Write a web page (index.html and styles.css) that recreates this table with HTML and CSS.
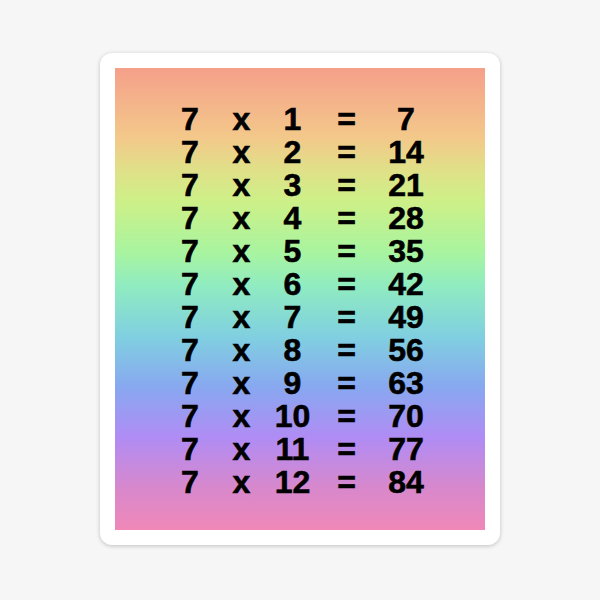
FILE: index.html
```html
<!DOCTYPE html>
<html>
<head>
<meta charset="utf-8">
<link rel="stylesheet" href="styles.css">
</head>
<body>
<div class="sticker">
  <div class="panel">
    <div class="table">
      <span>7</span><span>x</span><span>1</span><span>=</span><span>7</span>
      <span>7</span><span>x</span><span>2</span><span>=</span><span>14</span>
      <span>7</span><span>x</span><span>3</span><span>=</span><span>21</span>
      <span>7</span><span>x</span><span>4</span><span>=</span><span>28</span>
      <span>7</span><span>x</span><span>5</span><span>=</span><span>35</span>
      <span>7</span><span>x</span><span>6</span><span>=</span><span>42</span>
      <span>7</span><span>x</span><span>7</span><span>=</span><span>49</span>
      <span>7</span><span>x</span><span>8</span><span>=</span><span>56</span>
      <span>7</span><span>x</span><span>9</span><span>=</span><span>63</span>
      <span>7</span><span>x</span><span>10</span><span>=</span><span>70</span>
      <span>7</span><span>x</span><span>11</span><span>=</span><span>77</span>
      <span>7</span><span>x</span><span>12</span><span>=</span><span>84</span>
    </div>
  </div>
</div>
</body>
</html>
```
FILE: styles.css
```css
html, body {
  margin: 0;
  padding: 0;
  background: #f6f6f6;
}
body {
  width: 600px;
  height: 600px;
  overflow: hidden;
}
.sticker {
  margin: 53px 0 0 100px;
  width: 400px;
  height: 492px;
  box-sizing: border-box;
  padding: 15px 16px 16px 15px;
  background: #ffffff;
  border-radius: 12px;
  box-shadow: 0 1px 4px rgba(0, 0, 0, 0.22);
}
.panel {
  width: 370px;
  height: 462px;
  box-sizing: border-box;
  padding: 35px 0 0 49px;
  background: linear-gradient(to bottom,
    #f5a08a 0%,
    #f3c88a 15%,
    #e0e088 22%,
    #cdf088 29%,
    #a8f4a0 40%,
    #90ecc0 47%,
    #80d0e0 58%,
    #88a8f0 69%,
    #b08cf4 80%,
    #d888cc 91%,
    #f088b8 100%);
}
.table {
  display: grid;
  grid-template-columns: 52px 51px 51px 57px 62px;
  grid-auto-rows: 33px;
  font-family: "Liberation Sans", Arial, sans-serif;
  font-weight: bold;
  font-size: 32px;
  line-height: 33px;
  color: #000;
  -webkit-text-stroke: 0.6px #000;
}
.table span {
  text-align: center;
}
```
